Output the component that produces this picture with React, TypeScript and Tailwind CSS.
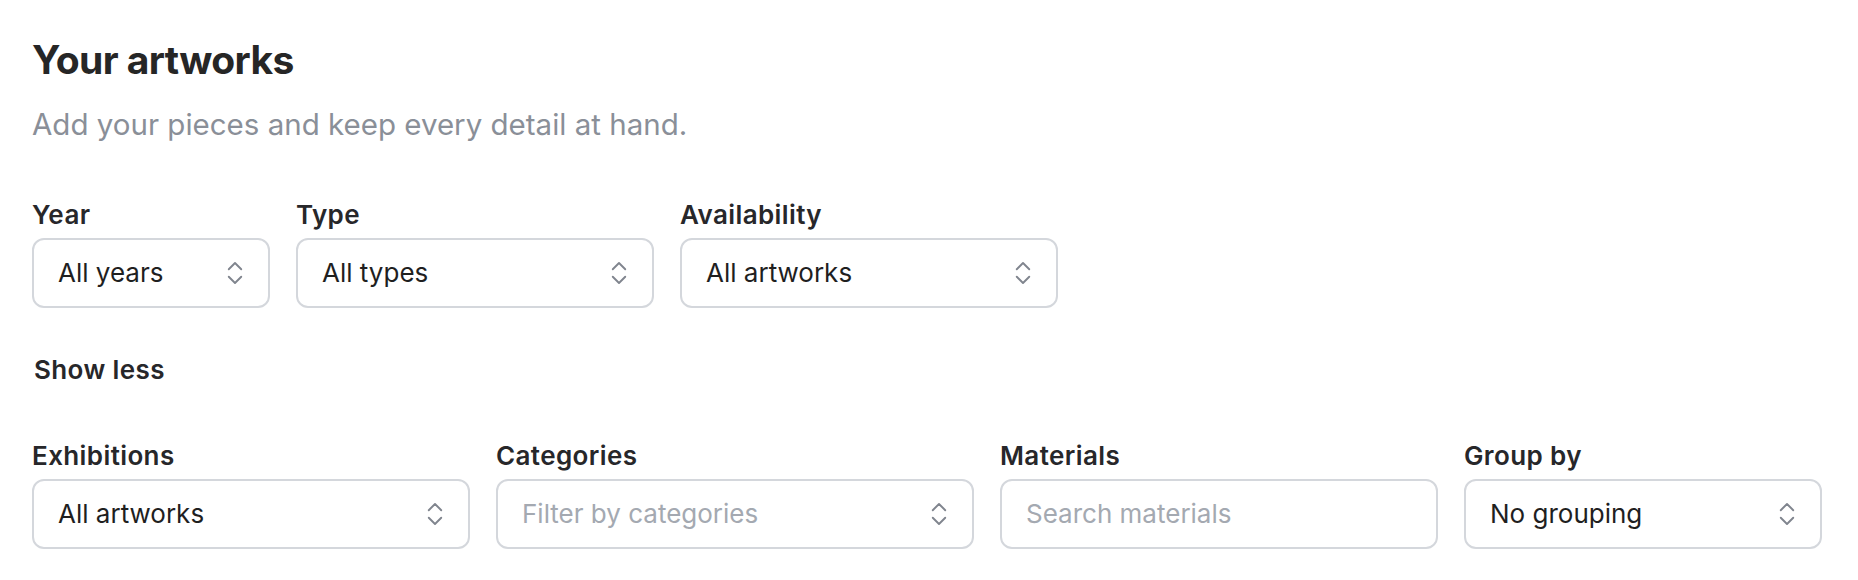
import { ChevronsUpDown } from "lucide-react";

type FieldProps = {
  label: string;
  width: string;
  value?: string;
  placeholder?: string;
  select?: boolean;
};

function Field({ label, width, value, placeholder, select = true }: FieldProps) {
  return (
    <div className={`flex flex-col gap-[8px] ${width}`}>
      <label className="text-[26px] font-semibold leading-[30px] tracking-[0.015em] text-[#27272a]">{label}</label>
      <div className="flex h-[70px] items-center justify-between rounded-[12px] border-2 border-[#d4d7dc] bg-white pl-[24px] pr-[18px]">
        {value ? (
          <span className="text-[26px] leading-[34px] text-[#1f1f1f]">{value}</span>
        ) : (
          <span className="text-[26px] leading-[34px] text-[#a4a9b1]">{placeholder}</span>
        )}
        {select && <ChevronsUpDown size={30} strokeWidth={1.5} className="shrink-0 text-[#80858e]" />}
      </div>
    </div>
  );
}

export default function App() {
  return (
    <div className="min-h-[580px] bg-white px-[32px] pt-[36px] font-['Inter','Noto_Sans',sans-serif]">
      <h1 className="text-[39px] font-bold leading-[48px] tracking-[-0.015em] text-[#262626]">Your artworks</h1>
      <p className="mt-[22px] text-[29.5px] leading-[36px] text-[#8a8f98]">Add your pieces and keep every detail at hand.</p>

      <div className="mt-[58px] flex gap-[26px]">
        <Field label="Year" width="w-[238px]" value="All years" />
        <Field label="Type" width="w-[358px]" value="All types" />
        <Field label="Availability" width="w-[378px]" value="All artworks" />
      </div>

      <button className="mt-[47px] block pl-[2px] text-[26px] font-semibold leading-[30px] tracking-[0.015em] text-[#27272a]">Show less</button>

      <div className="mt-[56px] flex gap-[26px]">
        <Field label="Exhibitions" width="w-[438px]" value="All artworks" />
        <Field label="Categories" width="w-[478px]" placeholder="Filter by categories" />
        <Field label="Materials" width="w-[438px]" placeholder="Search materials" select={false} />
        <Field label="Group by" width="w-[358px]" value="No grouping" />
      </div>
    </div>
  );
}
